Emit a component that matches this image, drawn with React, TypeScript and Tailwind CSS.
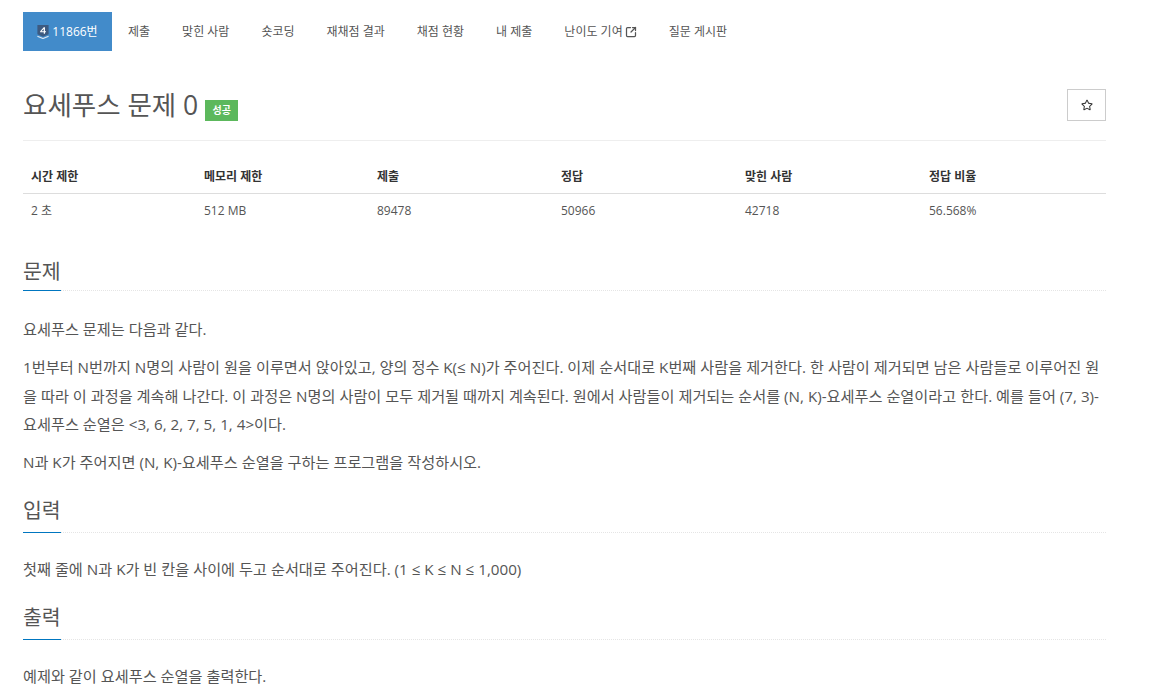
import { SquareArrowOutUpRight } from "lucide-react"
import { FaRegStar } from "react-icons/fa"

const font = "[font-family:'Open_Sans','Noto_Sans_CJK_KR',sans-serif]"

const tabs = ["제출", "맞힌 사람", "숏코딩", "재채점 결과", "채점 현황", "내 제출"]

const columns = [
  { label: "시간 제한", value: "2 초", width: "w-[173px]" },
  { label: "메모리 제한", value: "512 MB", width: "w-[173px]" },
  { label: "제출", value: "89478", width: "w-[184px]" },
  { label: "정답", value: "50966", width: "w-[184px]" },
  { label: "맞힌 사람", value: "42718", width: "w-[184px]" },
  { label: "정답 비율", value: "56.568%", width: "flex-1" },
]

function TierBadge() {
  return (
    <svg viewBox="0 0 12 15" className="h-[14px] w-[12px]">
      <path d="M0 0h12v10l-6 2.5L0 10z" fill="#3d5a80" />
      <path d="M0 12l6 2.5 6-2.5" fill="none" stroke="#dfe8f2" strokeWidth="1.2" />
      <path d="M6.8 2.5h1.3v4.2h1.1v1.1H8.100v1.600H6.800V7.800H3V6.800zM6.800 4.200L4.300 6.700h2.500z" fill="#fff" />
    </svg>
  )
}

function Heading({ title, padding }: { title: string; padding: string }) {
  return (
    <div className="border-b border-dotted border-[#e5e5e5]">
      <h2 className={`-mb-px inline-block border-b border-[#0076c0] ${padding} text-[20.5px] leading-[33px] font-normal text-[#555]`}>
        {title}
      </h2>
    </div>
  )
}

export default function App() {
  return (
    <div className={`${font} h-[700px] overflow-hidden bg-white px-[23px] pt-3 pr-[52px] text-[#555]`}>
      <nav className="flex h-[39px] items-center text-[12px]">
        <a className="flex h-full w-[89px] items-center justify-center gap-[3px] bg-[#428bca] text-white">
          <TierBadge />
          <span>11866번</span>
        </a>
        {tabs.map(t => (
          <a key={t} className="flex h-full items-center px-4">
            {t}
          </a>
        ))}
        <a className="flex h-full items-center gap-[2px] px-4">
          난이도 기여
          <SquareArrowOutUpRight className="h-3 w-3" strokeWidth={2.5} />
        </a>
        <a className="flex h-full items-center px-4">질문 게시판</a>
      </nav>

      <div className="mt-[38px] flex h-[52px] items-start justify-between border-b border-[#eee]">
        <div className="flex items-center">
          <h1 className="text-[26.5px] leading-[32px] font-normal text-[#555]">요세푸스 문제 0</h1>
          <span className="mt-[10px] ml-[7px] flex h-[21px] w-[33px] items-center justify-center bg-[#5cb85c] text-[10px] font-semibold text-white">
            성공
          </span>
        </div>
        <button className="flex h-8 w-[39px] items-center justify-center border border-[#ccc] bg-white text-[#333]">
          <FaRegStar className="h-3 w-3" />
        </button>
      </div>

      <div className="mt-5 text-[12px]">
        <div className="flex h-[33px] items-center border-b border-[#ddd] pb-[1px] font-bold text-[#333]">
          {columns.map(c => (
            <div key={c.label} className={`${c.width} pl-2`}>
              {c.label}
            </div>
          ))}
        </div>
        <div className="flex h-[33px] items-center">
          {columns.map(c => (
            <div key={c.label} className={`${c.width} pl-2`}>
              {c.value}
            </div>
          ))}
        </div>
      </div>

      <section className="mt-7">
        <Heading title="문제" padding="pb-[2px]" />
        <div className="mt-6 text-[15.2px] leading-[28.5px]">
          <p>요세푸스 문제는 다음과 같다.</p>
          <p className="mt-[9.500px]">
            1번부터 N번까지 N명의 사람이 원을 이루면서 앉아있고, 양의 정수 K(≤ N)가 주어진다. 이제 순서대로 K번째 사람을 제거한다. 한 사람이 제거되면 남은 사람들로 이루어진 원을 따라 이 과정을 계속해 나간다. 이 과정은 N명의 사람이 모두 제거될 때까지 계속된다. 원에서 사람들이 제거되는 순서를 (N, K)-요세푸스 순열이라고 한다. 예를 들어 (7, 3)-요세푸스 순열은 &lt;3, 6, 2, 7, 5, 1, 4&gt;이다.
          </p>
          <p className="mt-[9.500px]">N과 K가 주어지면 (N, K)-요세푸스 순열을 구하는 프로그램을 작성하시오.</p>
        </div>
      </section>

      <section className="mt-[17px]">
        <Heading title="입력" padding="pb-[5px]" />
        <p className="mt-[22px] text-[15.2px] leading-[28.5px]">
          첫째 줄에 N과 K가 빈 칸을 사이에 두고 순서대로 주어진다. (1 ≤ K ≤ N ≤ 1,000)
        </p>
      </section>

      <section className="mt-[18px]">
        <Heading title="출력" padding="pb-[5px]" />
        <p className="mt-[22px] text-[15.2px] leading-[28.5px]">예제와 같이 요세푸스 순열을 출력한다.</p>
      </section>
    </div>
  )
}
